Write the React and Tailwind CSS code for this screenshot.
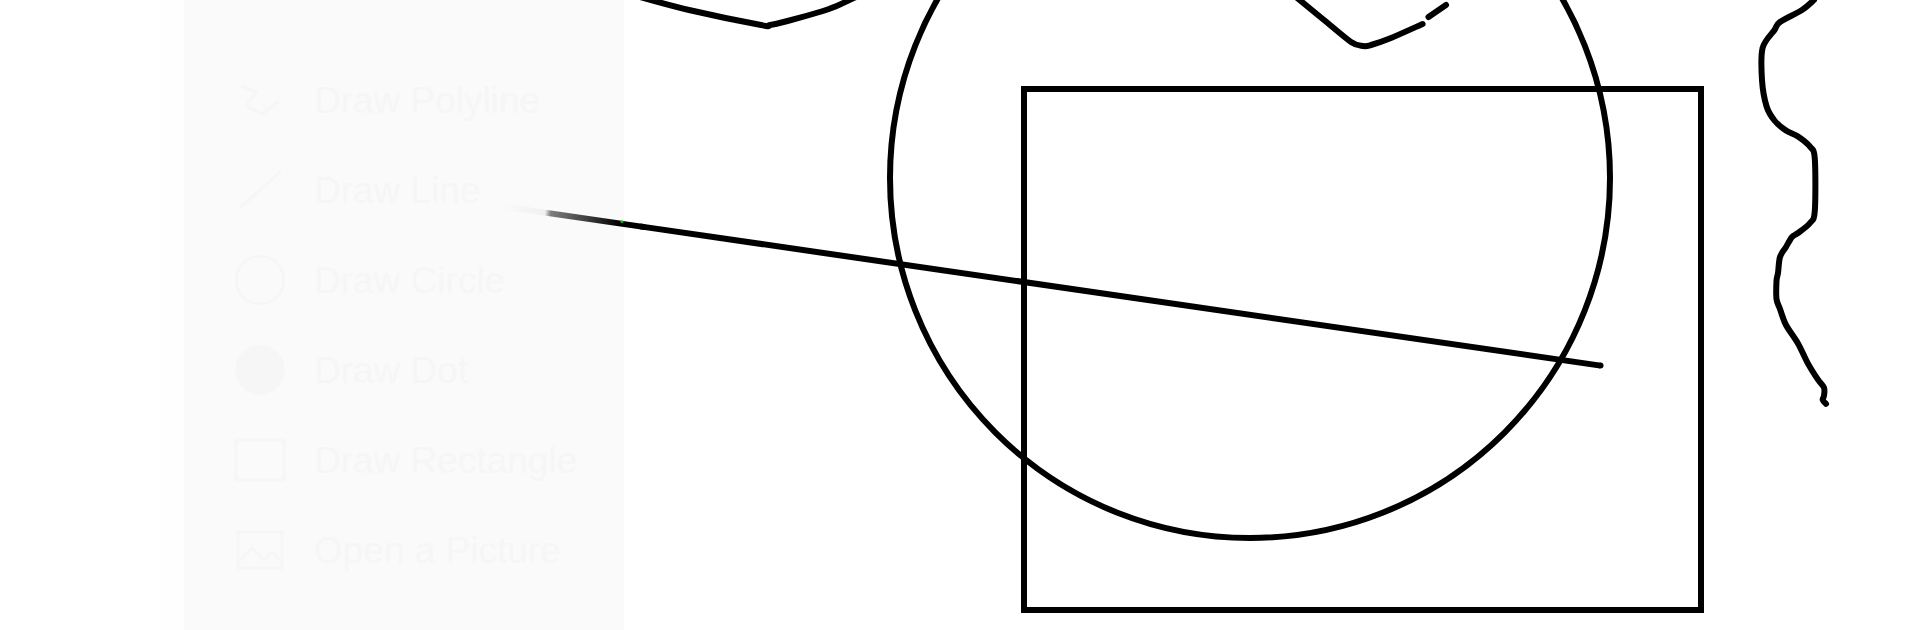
import React from "react";

const items = [
  { label: "Draw Polyline", icon: "polyline" },
  { label: "Draw Line", icon: "line" },
  { label: "Draw Circle", icon: "circle" },
  { label: "Draw Dot", icon: "dot" },
  { label: "Draw Rectangle", icon: "rect" },
  { label: "Open a Picture", icon: "picture" },
];

function GhostIcon({ kind }) {
  const c = "#f6f6f6";
  return (
    <svg width="56" height="56" viewBox="0 0 56 56" fill="none" stroke={c} strokeWidth="3">
      {kind === "polyline" && <path d="M10 14 L24 20 L14 34 L30 42 L46 30" strokeLinejoin="round" strokeLinecap="round" />}
      {kind === "line" && <path d="M8 46 L48 10" strokeLinecap="round" />}
      {kind === "circle" && <circle cx="28" cy="28" r="24" />}
      {kind === "dot" && <circle cx="28" cy="28" r="25" fill={c} stroke="none" />}
      {kind === "rect" && <rect x="4" y="8" width="48" height="40" />}
      {kind === "picture" && (
        <g>
          <rect x="6" y="10" width="44" height="36" />
          <path d="M6 40 L20 26 L32 38 L40 30 L50 40" />
        </g>
      )}
    </svg>
  );
}

const wavy = [
  [1814, 0], [1802, 10], [1780, 22], [1774.5, 30], [1762.6, 48], [1762, 80], [1766.6, 106.5],
  [1774.5, 120.5], [1786, 130.6], [1798, 136.6], [1810, 146.7], [1814.8, 158.7], [1814.8, 211],
  [1810, 223], [1798, 233], [1792, 237], [1786, 247], [1780, 257], [1778, 273], [1776.5, 281],
  [1776.5, 299], [1780, 309], [1786, 325], [1798, 343.5], [1808, 363.6], [1818, 379.7],
  [1824, 387.7], [1824, 395.8], [1822.7, 399.8], [1826, 403.8],
];

const topLeft = [[640, -3], [689, 10], [761, 25], [770, 25], [787.5, 21], [823, 11], [836.6, 6], [856, -3]];
const topMid = [[1296, -3], [1324, 20], [1351, 42], [1363, 46], [1371, 45], [1391, 38], [1422.6, 24]];

function smooth(p) {
  let d = `M${p[0][0]},${p[0][1]}`;
  for (let i = 0; i < p.length - 1; i++) {
    const p0 = p[i - 1] || p[i];
    const p1 = p[i];
    const p2 = p[i + 1];
    const p3 = p[i + 2] || p2;
    const t = 0.16;
    const c1x = p1[0] + (p2[0] - p0[0]) * t;
    const c1y = p1[1] + (p2[1] - p0[1]) * t;
    const c2x = p2[0] - (p3[0] - p1[0]) * t;
    const c2y = p2[1] - (p3[1] - p1[1]) * t;
    d += ` C${c1x.toFixed(1)},${c1y.toFixed(1)} ${c2x.toFixed(1)},${c2y.toFixed(1)} ${p2[0]},${p2[1]}`;
  }
  return d;
}

export default function App() {
  return (
    <div className="relative w-[1920px] h-[630px] overflow-hidden bg-white" style={{ fontFamily: '"Liberation Sans", Arial, sans-serif' }}>
      <div className="flex h-full">
        <div className="w-[160px] shrink-0" />
        <div className="w-[24px] shrink-0 bg-[#fefefe]" />
        <aside className="w-[440px] shrink-0 bg-[#fafafa] flex flex-col pt-[72px] gap-[34px] pl-[48px]">
          {items.map((it) => (
            <div key={it.label} className="flex items-center gap-[26px] h-[56px]">
              <GhostIcon kind={it.icon} />
              <span className="text-[37px] leading-none text-[#f6f6f6]">{it.label}</span>
            </div>
          ))}
        </aside>
        <div className="flex-1" />
      </div>

      <svg className="absolute inset-0 pointer-events-none" width="1920" height="630" viewBox="0 0 1920 630">
        <defs>
          <linearGradient id="fade" gradientUnits="userSpaceOnUse" x1="500" y1="206" x2="645" y2="227">
            <stop offset="0" stopColor="#000" stopOpacity="0" />
            <stop offset="0.31" stopColor="#000" stopOpacity="0.04" />
            <stop offset="0.35" stopColor="#000" stopOpacity="0.5" />
            <stop offset="0.6" stopColor="#000" stopOpacity="0.75" />
            <stop offset="0.82" stopColor="#000" stopOpacity="1" />
            <stop offset="1" stopColor="#000" stopOpacity="1" />
          </linearGradient>
        </defs>
        <line x1="500" y1="206.1" x2="645" y2="227.1" stroke="url(#fade)" strokeWidth="6" strokeLinecap="butt" />
        <g fill="none" stroke="#000" strokeWidth="6" strokeLinecap="round" strokeLinejoin="round">
          <path d={smooth(topLeft)} />
          <path d={smooth(topMid)} />
          <line x1="1428.5" y1="17" x2="1446" y2="5" />
          <path d={smooth(wavy)} />
          <circle cx="1250" cy="178" r="360" />
          <rect x="1024" y="89" width="677" height="521" strokeLinejoin="miter" strokeLinecap="butt" />
          <line x1="640" y1="226.4" x2="1600.5" y2="365.6" strokeLinecap="butt" />
          <circle cx="1600.5" cy="365.6" r="3" fill="#000" stroke="none" />
        </g>
        <circle cx="622" cy="221.5" r="1.6" fill="#2fd12f" opacity="0.8" />
      </svg>
    </div>
  );
}
